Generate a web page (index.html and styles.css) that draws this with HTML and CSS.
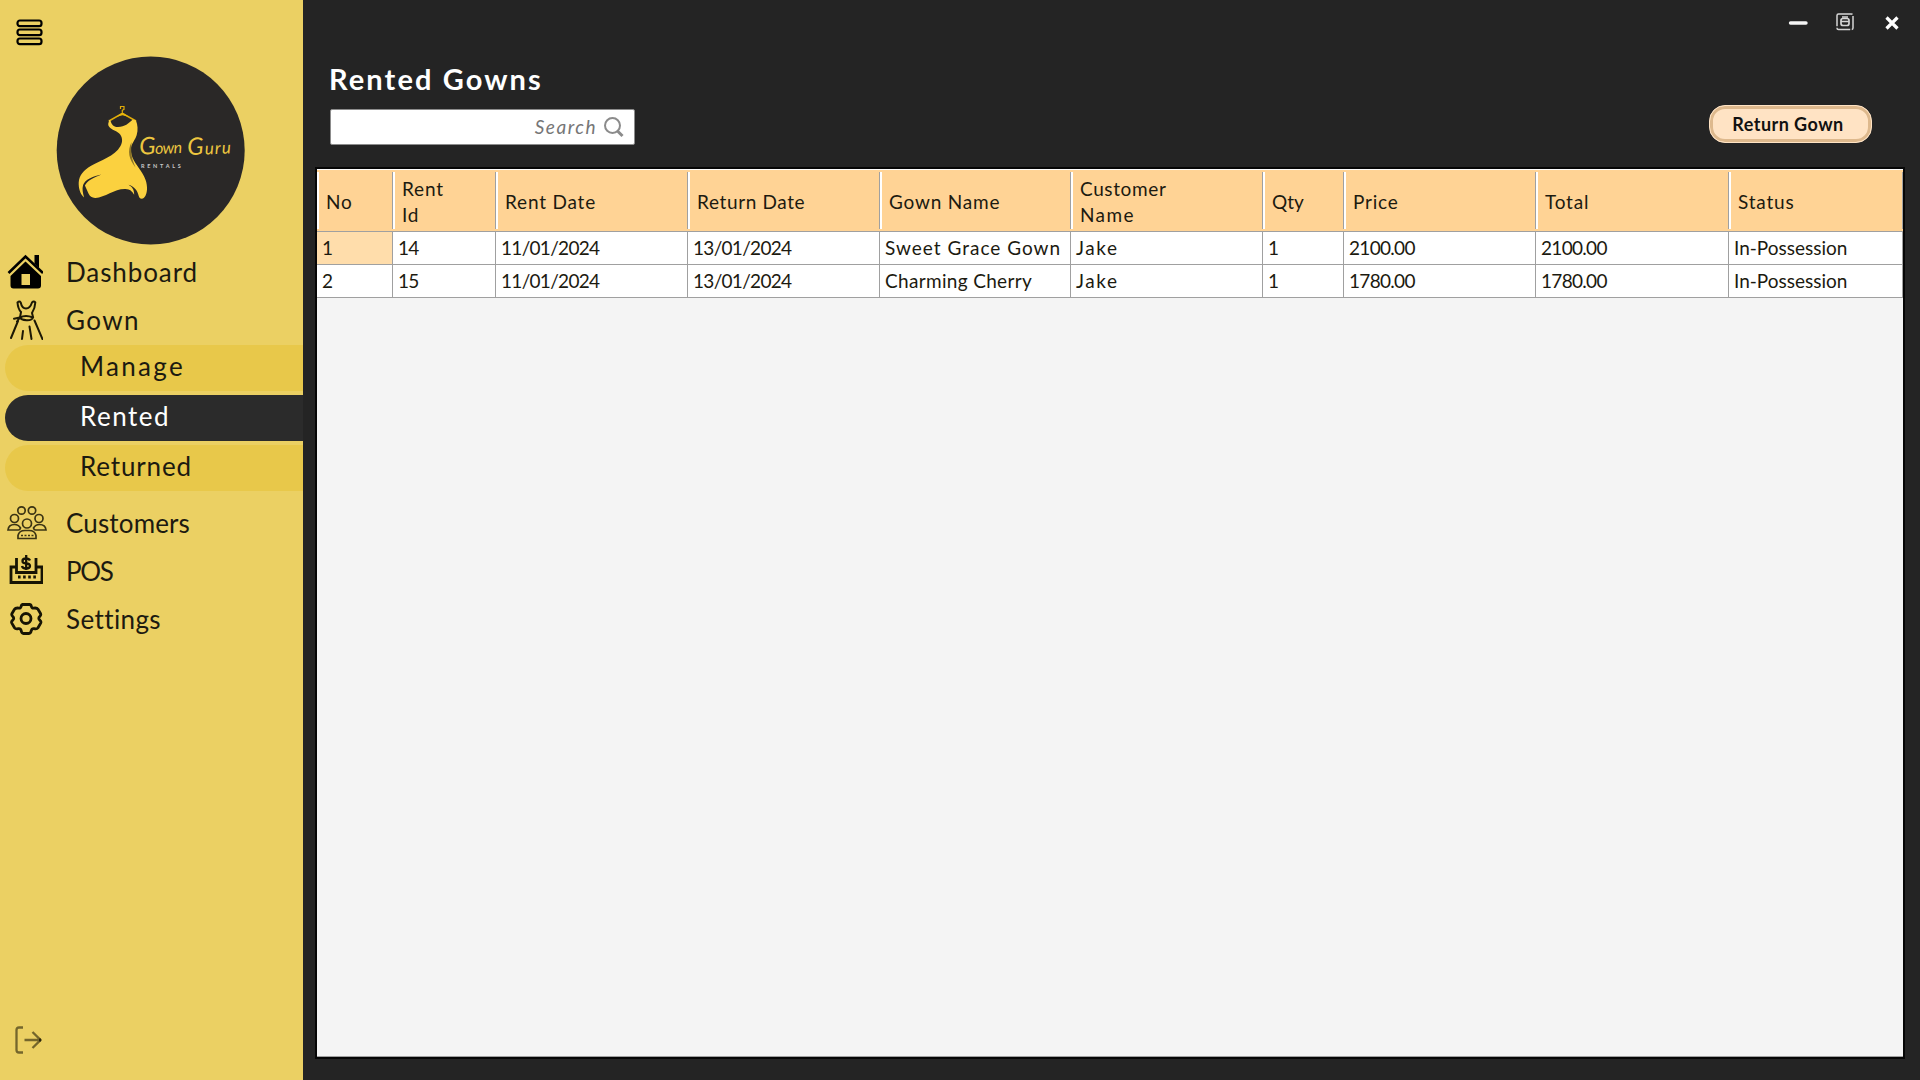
FILE: index.html
```html
<!DOCTYPE html>
<html lang="en">
<head>
<meta charset="utf-8">
<title>Gown Guru Rentals</title>
<link rel="stylesheet" href="styles.css">
</head>
<body>
<div class="app">
  <aside class="sidebar">
    <button class="icon-btn menu-btn" aria-label="Menu">
      <svg width="28" height="28" viewBox="0 0 28 28" fill="none" stroke="#000" stroke-width="2.200"><rect x="1.5" y="1.5" width="24" height="5.6" rx="2.4"/><rect x="1.5" y="10.5" width="24" height="5.6" rx="2.4"/><rect x="1.5" y="19.5" width="24" height="5.6" rx="2.4"/></svg>
    </button>
    <svg class="logo" width="190" height="190" viewBox="56 55 190 190">
      <circle cx="150.7" cy="150.5" r="94" fill="#2a2827"/>
      <g fill="none" stroke="#e0ab08" stroke-width="1.2"><path d="M120.5 109v-2.500h3.500v2.800l-1.700 1v2.500"/><path d="M109 121l13.300-7.600L136 121" stroke-width="1.600"/></g>
      <path fill="#e8b60c" d="M116 117l6.500-4.500 7 4.500-7-1.700z"/>
      <path fill="#fbd13f" d="M110.500 120.500c1 4 3.200 6.800 7.500 6.600 7-.5 10.500-3.500 14.700-7.600l3.300 1c1.700 4.500 2.200 9.500.7 14.500-1.700 5.500-5.300 8.500-5.800 13.500-.6 9 5 15 10 22.500 4 6 6.500 12 6.100 18.500-.3 5-2.300 9.200-5.200 9.200-3.600 0-2.800-5-5.800-9-2.500-3.300-5.500-4.500-7.500-5 4 2.500 5.500 4.500 5.700 10-2.300-3.500-4-5.500-8.700-5.700-10.500-.5-20.500 8.500-30 8.900-3.500.1-5.500-1-7-4.300l-3.600-8c2.600-5.500 9-8 16.500-11.100-8 1.600-16 4.600-18.300 10.500-1.200 3.700-.2 8 1 12.500-4-3.500-5.600-9.500-5.400-15 .5-7.500 5.300-12.500 12-16.500 9.500-5.800 24-9.500 29.800-20 2.500-4.600 2-9.500-1.500-12.800-3.200-2.900-9.500-4-10.700-8-.5-2 1-3.500.5-5.500z"/>
      <path fill="#8b7427" d="M131.500 142c-4.500 9.500-2.500 17 4 25.500-5-12-4.500-17-4-25.500z"/>
      <g class="script"><text x="139.500" y="154.500" font-size="16" transform="rotate(-2 140 154)"><tspan font-size="24">G</tspan>own</text><text class="wide" x="187.500" y="155" font-size="17" transform="rotate(-2 188 154)"><tspan font-size="24">G</tspan>uru</text></g>
      <text class="tagline" x="141" y="167.700">RENTALS</text>
    </svg>
    <nav class="nav">
      <a class="item">
        <svg width="36" height="36" viewBox="0 0 36 36"><path d="M1.500 19L18.500 2.500 36 19" fill="none" stroke="#000" stroke-width="2.600"/><path d="M27.500 1h4.500v13l-4.500-4.500z"/><path fill-rule="evenodd" d="M18.500 7.500L34 22v9.500q0 3-3 3H6.500q-3 0-3-3V22zM14.500 20v11h8.500V20z"/></svg>
        <span class="ls-dashboard">Dashboard</span></a>
      <a class="item">
        <svg width="36" height="40" viewBox="0 0 36 40" fill="none" stroke="#1d1905" stroke-width="2" stroke-linecap="round"><path d="M13 17.500L14 12q-3-3-3.500-9.500 2-1.800 3.200 0Q15 8.500 19 8.500t6-6q1.800-1.800 3.300 0Q28 8.500 25 13l1 4"/><path d="M13 17.500q5.500-3 13 0-1 3-6.500 2.700T13 17.500l-6 1.300m6-1.300l-3 4M11 21L4 38M27.500 20.500L35.500 39M16 31l-1 8M22.500 26.500L24.500 39"/></svg>
        <span class="ls-gown">Gown</span></a>
      <div class="sub">
        <a class="pill ls-manage">Manage</a>
        <a class="pill active ls-rented">Rented</a>
        <a class="pill ls-returned">Returned</a>
      </div>
      <a class="item">
        <svg width="40" height="36" viewBox="0 0 40 36" fill="none" stroke="#3b3414" stroke-width="1.700"><circle cx="14.500" cy="5.500" r="3.700"/><circle cx="25" cy="5.500" r="3.700"/><circle cx="7.500" cy="13.500" r="4"/><circle cx="32" cy="13.500" r="4"/><circle cx="20" cy="18.500" r="4.500"/><path d="M1 25q.5-5.500 6.500-5.500 4 0 6 3.500-.5 2-2 2zM39 25q-.5-5.500-6.500-5.500-4 0-6 3.500.5 2 2 2zM11 33.500v-3q1-5 7-5h4q6 0 7 5v3z"/><path d="M14 30.500h13" stroke-dasharray="2 1.500"/></svg>
        <span class="ls-customers">Customers</span></a>
      <a class="item">
        <svg width="36" height="34" viewBox="0 0 36 34" fill="none" stroke="#171404" stroke-width="2.800"><path d="M9.500 4v14.500h19.500V4"/><path d="M9 13H4v15.500h31V13h-5.500"/><path d="M11 23h18" stroke-width="3" stroke-dasharray="2.600 2.500"/><path d="M23 6.500q-1-2-4-2-3.500 0-3.500 2.500t3.500 2.300q4 .2 4 2.700t-4 2.500q-3.500 0-4-2.500M19.200 1v15" stroke-width="2.300"/></svg>
        <span class="ls-pos">POS</span></a>
      <a class="item">
        <svg width="36" height="36" viewBox="0 0 36 36" fill="none" stroke="#171404" stroke-width="2.800"><path stroke-linejoin="round" d="M15.500 3.500h7q1.500 0 1.900 2 .4 2 2.300 1.600 3.200-.5 4.300 1.200l2.500 4.200q.8 1.600-.8 3-1.800 1.700 0 3.600 1.800 1.500 1 3l-2.700 4.600q-1 1.600-3.800 1-2.300-.4-2.900 1.900-.5 2.900-2.300 2.900h-5.500q-1.900 0-2.300-2.900-.6-2.300-2.900-1.900-2.800.6-3.800-1l-2.700-4.600q-.8-1.500 1-3 1.800-1.900 0-3.600-1.600-1.400-.8-3l2.500-4.200q1.100-1.700 4.300-1.200 1.900.4 2.300-1.600.4-2 1.900-2z"/><circle cx="19" cy="17.500" r="5"/></svg>
        <span class="ls-settings">Settings</span></a>
    </nav>
    <button class="icon-btn exit-btn" aria-label="Log out">
      <svg width="28" height="28" viewBox="0 0 28 28" fill="none" stroke="#74662c" stroke-width="2.300"><path d="M9 1.500H5Q2.500 1.500 2.500 4v20q0 2.500 2.500 2.500h4M10.500 14H26M18.500 6l8 8-8 8"/><path d="M25 14h2" stroke="#2c260c" stroke-width="3"/></svg>
    </button>
  </aside>

  <main class="main">
    <div class="titlebar">
      <svg width="20" height="20" viewBox="0 0 20 20"><path d="M2.500 10h15.500" stroke="#f4f4f4" stroke-width="3.400" stroke-linecap="round"/></svg>
      <svg width="20" height="20" viewBox="0 0 20 20" fill="none" stroke="#d5d5d5" stroke-width="1.500"><rect x="2" y="1" width="16" height="15.500" rx="1.500" stroke-dasharray="14 1.500"/><rect x="6" y="5.500" width="8" height="7" rx="2" stroke-width="1.700"/><path d="M6 8.500h8M7 4h6"/></svg>
      <svg width="20" height="20" viewBox="0 0 20 20"><path d="M4.500 4.500l11 11M15.500 4.500l-11 11" stroke="#fff" stroke-width="3.200"/></svg>
    </div>
    <header class="head">
      <div>
        <h1>Rented Gowns</h1>
        <label class="search"><span>Search</span>
          <svg width="22" height="22" viewBox="0 0 22 22" fill="none" stroke="#8b8b8b"><circle cx="9.500" cy="9.500" r="7.500" stroke-width="2"/><path d="M14.500 15l5 5" stroke-width="3"/></svg>
        </label>
      </div>
      <button class="return-btn">Return Gown</button>
    </header>
    <section class="panel">
      <table>
        <colgroup><col class="c-no"><col class="c-id"><col class="c-date"><col class="c-date"><col class="c-gown"><col class="c-cust"><col class="c-qty"><col class="c-price"><col class="c-total"><col class="c-status"></colgroup>
        <thead><tr>
          <th>No</th><th>Rent<br>Id</th><th>Rent Date</th><th class="ls-06">Return Date</th><th>Gown Name</th><th class="ls-06">Customer<br><span class="ls-name">Name</span></th><th class="ls-0">Qty</th><th>Price</th><th>Total</th><th>Status</th>
        </tr></thead>
        <tbody>
          <tr><td class="selected">1</td><td>14</td><td>11/01/2024</td><td>13/01/2024</td><td class="ls-sweet">Sweet Grace Gown</td><td class="ls-jake">Jake</td><td>1</td><td>2100.00</td><td>2100.00</td><td class="ls-0">In-Possession</td></tr>
          <tr><td>2</td><td>15</td><td>11/01/2024</td><td>13/01/2024</td><td class="ls-charming">Charming Cherry</td><td class="ls-jake">Jake</td><td>1</td><td>1780.00</td><td>1780.00</td><td class="ls-0">In-Possession</td></tr>
        </tbody>
      </table>
    </section>
  </main>
</div>
</body>
</html>
```
FILE: styles.css
```css
* { box-sizing: border-box; }
body { margin: 0; font-family: "Century Gothic", Lato, sans-serif; color: #1c1a10; }
button { font-family: inherit; }
svg { display: block; flex: none; }

.app { display: flex; width: 1920px; height: 1080px; background: #242424; overflow: hidden; }

/* Sidebar */
.sidebar { width: 303px; background: #ebd063; display: flex; flex-direction: column; padding: 19px 0 26px; }
.icon-btn { border: 0; background: none; padding: 0; }
.menu-btn { margin-left: 16px; align-self: flex-start; }
.logo { margin: 8px 0 0 56px; }
.script { font-style: italic; fill: #ecc640; letter-spacing: -0.6px; }
.script .wide { letter-spacing: 1.1px; }
.tagline { font-size: 5.5px; font-weight: 700; letter-spacing: 2.7px; fill: #c9c9c9; }

.nav { display: flex; flex-direction: column; margin-top: 3px; font-size: 26px; flex: 1; }
.item { display: flex; align-items: center; height: 48px; padding-left: 7px; }
.item span { width: 200px; margin-left: auto; margin-right: 37px; }
.sub { display: flex; flex-direction: column; gap: 4px; padding: 1px 0 8px 5px; }
.pill { display: flex; align-items: center; height: 46px; padding: 0 0 4px 75px; background: #e8c84a; border-radius: 23px 0 0 23px; }
.pill.active { background: #2b2b2b; color: #fff; }
.exit-btn { margin-left: 14px; align-self: flex-start; }

/* Main area */
.main { flex: 1; display: flex; flex-direction: column; padding: 0 15px 21px 12px; }
.titlebar { display: flex; justify-content: flex-end; gap: 27px; height: 44px; padding: 13px 3px 0 0; }
.head { display: flex; justify-content: space-between; align-items: flex-end; padding: 18px 33px 22px 15px; }
h1 { margin: 0 0 13px -1px; font-size: 29px; line-height: 34px; letter-spacing: 2.1px; color: #fff; }
.search { display: flex; align-items: center; justify-content: flex-end; gap: 6px; width: 305px; height: 36px; padding: 0 9px 0 0; background: #fff; border: 1px solid #8c8c8c; border-radius: 2px; font-size: 19px; font-style: italic; letter-spacing: 1.5px; color: #767676; }
.search span { padding-bottom: 2px; }
.return-btn { width: 163px; height: 38px; margin-bottom: 2px; padding: 0 5px 1px 0; border: 1px solid #ffe3c4; border-radius: 16px; background: #ffe3c4; box-shadow: inset 0 0 0 3px #deb98d; font-size: 18px; font-weight: 700; letter-spacing: .45px; color: #111; }

/* Data grid */
.panel { flex: 1; border: 2px solid #060606; background: #f4f4f4; box-shadow: inset 0 -1px #a0a0a0; }
table { table-layout: fixed; width: 1586px; border-collapse: separate; border-spacing: 0; font-size: 19px; }
.c-no { width: 76px; }
.c-id { width: 103px; }
.c-date { width: 192px; }
.c-gown { width: 191px; }
.c-cust { width: 192px; }
.c-qty { width: 81px; }
.c-price { width: 192px; }
.c-total { width: 193px; }
.c-status { width: 174px; }
th, td { text-align: left; white-space: nowrap; border-bottom: 1px solid #a0a0a0; }
th {
  height: 63px; padding: 3px 0 0 9px; font-weight: 400; line-height: 25.6px; letter-spacing: .8px; vertical-align: middle;
  background:
    linear-gradient(#fff, #fff) 0 0 / 100% 1px no-repeat,
    linear-gradient(#fff, #fff) 0 3px / 2px 57px no-repeat,
    linear-gradient(#a0a0a0, #a0a0a0) 100% 3px / 1px 57px no-repeat,
    #ffd395;
}
td { height: 33px; padding: 0 0 0 5px; line-height: 24px; letter-spacing: -.7px; background: #fff; border-right: 1px solid #a0a0a0; }
td.selected { background: #ffddab; }

/* Tracking per label */
.ls-dashboard { letter-spacing: .9px; }
.ls-gown { letter-spacing: 1.4px; }
.ls-manage { letter-spacing: 2.3px; }
.ls-rented { letter-spacing: 1.5px; }
.ls-returned { letter-spacing: .85px; }
.ls-customers { letter-spacing: .15px; }
.ls-pos { letter-spacing: -1.4px; }
.ls-settings { letter-spacing: .4px; }
.ls-06 { letter-spacing: .62px; }
.ls-name { letter-spacing: 1.4px; }
.ls-0 { letter-spacing: 0; }
.ls-sweet { letter-spacing: 1px; }
.ls-charming { letter-spacing: .33px; }
.ls-jake { letter-spacing: 1.6px; }
```
